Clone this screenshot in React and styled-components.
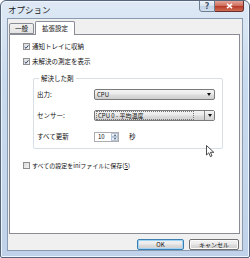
import React from "react"
import styled, { createGlobalStyle } from "styled-components"

const GlobalStyle = createGlobalStyle`
  html, body {
    margin: 0;
    padding: 0;
    background: #ffffff;
  }
  body {
    font-family: "Noto Sans CJK JP", "Liberation Sans", sans-serif;
  }
`

const FONT = `"Noto Sans CJK JP", "Liberation Sans", sans-serif`

const Window = styled.div`
  position: relative;
  width: 250px;
  height: 258px;
  box-sizing: border-box;
  border: 1px solid #56657a;
  border-radius: 6px 6px 2px 2px;
  background: linear-gradient(180deg, #dfe9f5 0%, #c9dbee 30%, #bfd2e9 100%);
  box-shadow: inset 0 0 0 1px #eef4fb;
  display: flex;
  flex-direction: column;
  overflow: hidden;
`

const TitleBar = styled.div`
  height: 17px;
  display: flex;
  align-items: flex-start;
  padding-left: 7px;
`

const Title = styled.span`
  font-family: ${FONT};
  font-size: 8.5px;
  line-height: 14px;
  color: #1a1a1a;
  margin-top: 1px;
`

const Caption = styled.div`
  margin-left: auto;
  margin-right: 5px;
  margin-top: -1px;
  display: flex;
`

const CapButton = styled.div`
  height: 12px;
  width: ${p => p.$w}px;
  box-sizing: border-box;
  border: 1px solid ${p => (p.$close ? "#6b2e2e" : "#6d7d92")};
  border-left-width: ${p => (p.$close ? 0 : 1)}px;
  border-radius: ${p => (p.$close ? "0 0 3px 0" : "0 0 0 3px")};
  background: ${p =>
    p.$close
      ? "linear-gradient(180deg, #e5a597 0%, #d0705f 45%, #b83c2a 55%, #cf6d52 100%)"
      : "linear-gradient(180deg, #eef3f9 0%, #d9e4f1 45%, #c3d3e6 55%, #d2dfee 100%)"};
  display: flex;
  align-items: center;
  justify-content: center;
  font-family: "DejaVu Sans", sans-serif;
  font-size: 8px;
  font-weight: bold;
  color: ${p => (p.$close ? "#ffffff" : "#4b5a70")};
`

const Client = styled.div`
  flex: 1;
  margin: 0 6px 6px 6px;
  background: #f0f0f0;
  border: 1px solid #8a9bb1;
  display: flex;
  flex-direction: column;
  padding: 2px 2px 0 0;
`

const TabStrip = styled.div`
  display: flex;
  align-items: flex-end;
  height: 13px;
  padding-left: 1px;
  position: relative;
  z-index: 1;
`

const Tab = styled.div`
  font-family: ${FONT};
  font-size: 6.5px;
  color: #111;
  box-sizing: border-box;
  height: ${p => (p.$active ? 14 : 11)}px;
  padding: 0 ${p => (p.$active ? 6 : 5)}px;
  margin-right: ${p => (p.$active ? 0 : 1)}px;
  margin-bottom: ${p => (p.$active ? -1 : 0)}px;
  border: 1px solid #898c95;
  border-bottom: ${p => (p.$active ? "none" : "1px solid #898c95")};
  border-radius: 2px 2px 0 0;
  background: ${p =>
    p.$active ? "#ffffff" : "linear-gradient(180deg, #f2f2f2 0%, #e3e3e3 100%)"};
  display: flex;
  align-items: center;
  line-height: 1;
`

const Panel = styled.div`
  height: 200px;
  box-sizing: border-box;
  margin-left: 1px;
  background: #ffffff;
  border: 1px solid #898c95;
  padding: 6px 0 0 13px;
  display: flex;
  flex-direction: column;
`

const CheckRow = styled.div`
  display: flex;
  align-items: center;
  height: 11px;
  margin-top: ${p => p.$mt || 0}px;
  gap: 2px;
`

const Box = styled.div`
  width: 7px;
  height: 7px;
  box-sizing: border-box;
  border: 1px solid #8e8f8f;
  background: linear-gradient(135deg, #dcdcdc 0%, #f4f4f4 100%);
  display: flex;
  align-items: center;
  justify-content: center;
`

const Text = styled.span`
  font-family: ${FONT};
  font-size: ${p => p.$size || 6.5}px;
  line-height: 1;
  color: #111;
  white-space: nowrap;
`

const GroupBox = styled.div`
  position: relative;
  margin: 11px 0 0 10px;
  width: 190px;
  box-sizing: border-box;
  border: 1px solid #d5dfe5;
  border-radius: 2px;
  padding: 10px 0 6px 3px;
  display: flex;
  flex-direction: column;
  gap: 10px;
`

const Legend = styled.span`
  position: absolute;
  top: -5px;
  left: 5px;
  padding: 0 2px;
  background: #ffffff;
  font-family: ${FONT};
  font-size: 6.5px;
  line-height: 9px;
  color: #111;
`

const FieldRow = styled.div`
  display: flex;
  align-items: center;
  height: 11px;
`

const Label = styled(Text)`
  width: 57px;
`

const Combo = styled.div`
  width: 121px;
  height: 11px;
  box-sizing: border-box;
  border: 1px solid #7a7a7a;
  border-radius: 2px;
  background: linear-gradient(180deg, #f3f3f3 0%, #ebebeb 45%, #dddddd 55%, #cfcfcf 100%);
  display: flex;
  align-items: center;
  padding-left: 2px;
`

const ComboText = styled(Text)`
  font-size: 6px;
  flex: 1;
  display: flex;
  align-items: center;
`

const FocusText = styled.span`
  border: 1px dotted #777;
  padding: 0 1px;
  margin-left: -1px;
  line-height: 7px;
  display: flex;
  align-items: center;
  width: 94px;
`

const Arrow = styled.div`
  width: 10px;
  height: 100%;
  box-sizing: border-box;
  display: flex;
  align-items: center;
  justify-content: center;
  border-left: ${p => (p.$split ? "1px solid #8a8a8a" : "none")};
  background: ${p =>
    p.$split ? "linear-gradient(180deg, #f6f6f6 0%, #e2e2e2 50%, #d3d3d3 100%)" : "transparent"};
  &::after {
    content: "";
    border-left: 2.5px solid transparent;
    border-right: 2.5px solid transparent;
    border-top: 3px solid #111;
  }
`

const Spinner = styled.div`
  width: 25px;
  height: 10px;
  box-sizing: border-box;
  border: 1px solid #abadb3;
  background: #ffffff;
  display: flex;
  align-items: center;
  padding-left: 3px;
`

const SpinButtons = styled.div`
  margin-left: auto;
  width: 7px;
  height: 100%;
  display: flex;
  flex-direction: column;
`

const SpinHalf = styled.div`
  flex: 1;
  box-sizing: border-box;
  border: 1px solid #b7c4d6;
  background: linear-gradient(180deg, #f4f7fb 0%, #dfe7f1 100%);
  display: flex;
  align-items: center;
  justify-content: center;
  &::after {
    content: "";
    border-left: 1.5px solid transparent;
    border-right: 1.5px solid transparent;
    ${p => (p.$down ? "border-top: 2px solid #405070;" : "border-bottom: 2px solid #405070;")}
  }
`

const Unit = styled(Text)`
  margin-left: 10px;
`

const ButtonRow = styled.div`
  display: flex;
  justify-content: flex-end;
  gap: 5px;
  padding: 5px 1px 0 0;
`

const Button = styled.div`
  width: ${p => p.$w}px;
  height: 11px;
  box-sizing: border-box;
  border: 1px solid ${p => (p.$default ? "#3c7fb1" : "#707070")};
  border-radius: 2px;
  box-shadow: inset 0 0 0 1px ${p => (p.$default ? "#9fd4f4" : "#fbfbfb")};
  background: linear-gradient(180deg, #f2f2f2 0%, #ebebeb 45%, #dddddd 55%, #cfcfcf 100%);
  display: flex;
  align-items: center;
  justify-content: center;
  font-family: ${FONT};
  font-size: 6px;
  color: #111;
`

const Cursor = styled.svg`
  position: absolute;
  left: 205px;
  top: 144px;
`

const Check = () => (
  <svg width="6" height="6" viewBox="0 0 6 6">
    <path d="M0.8 3 L2.4 4.6 L5.2 1" stroke="#2b3f6a" strokeWidth="1.2" fill="none" />
  </svg>
)

const App = () => (
  <>
    <GlobalStyle />
    <Window>
      <TitleBar>
        <Title>オプション</Title>
        <Caption>
          <CapButton $w={16}>?</CapButton>
          <CapButton $w={29} $close>
            <svg width="7" height="6" viewBox="0 0 7 6">
              <path d="M1 0.8 L6 5.2 M6 0.8 L1 5.2" stroke="#ffffff" strokeWidth="1.6" />
            </svg>
          </CapButton>
        </Caption>
      </TitleBar>
      <Client>
        <TabStrip>
          <Tab>一般</Tab>
          <Tab $active>拡張設定</Tab>
        </TabStrip>
        <Panel>
          <CheckRow>
            <Box><Check /></Box>
            <Text>通知トレイに収納</Text>
          </CheckRow>
          <CheckRow $mt={4}>
            <Box><Check /></Box>
            <Text>未解決の測定を表示</Text>
          </CheckRow>
          <GroupBox>
            <Legend>解決した剤</Legend>
            <FieldRow>
              <Label>出力:</Label>
              <Combo>
                <ComboText>CPU</ComboText>
                <Arrow />
              </Combo>
            </FieldRow>
            <FieldRow>
              <Label>センサー:</Label>
              <Combo>
                <ComboText>
                  <FocusText>CPU 0 - 平均温度</FocusText>
                </ComboText>
                <Arrow $split />
              </Combo>
            </FieldRow>
            <FieldRow>
              <Label>すべて更新</Label>
              <Spinner>
                <ComboText>10</ComboText>
                <SpinButtons>
                  <SpinHalf />
                  <SpinHalf $down />
                </SpinButtons>
              </Spinner>
              <Unit>秒</Unit>
            </FieldRow>
          </GroupBox>
          <CheckRow $mt={11}>
            <Box />
            <Text $size={6}>すべての設定をiniファイルに保存(<u>S</u>)</Text>
          </CheckRow>
        </Panel>
        <ButtonRow>
          <Button $w={47} $default>OK</Button>
          <Button $w={50}>キャンセル</Button>
        </ButtonRow>
      </Client>
      <Cursor width="9" height="13" viewBox="0 0 9 13">
        <path
          d="M0.5 0.5 L0.5 10 L2.8 7.8 L4.4 11.6 L6 10.9 L4.5 7.3 L7.8 7.3 Z"
          fill="#ffffff"
          stroke="#222"
          strokeWidth="0.8"
          strokeLinejoin="round"
        />
      </Cursor>
    </Window>
  </>
)

export default App
